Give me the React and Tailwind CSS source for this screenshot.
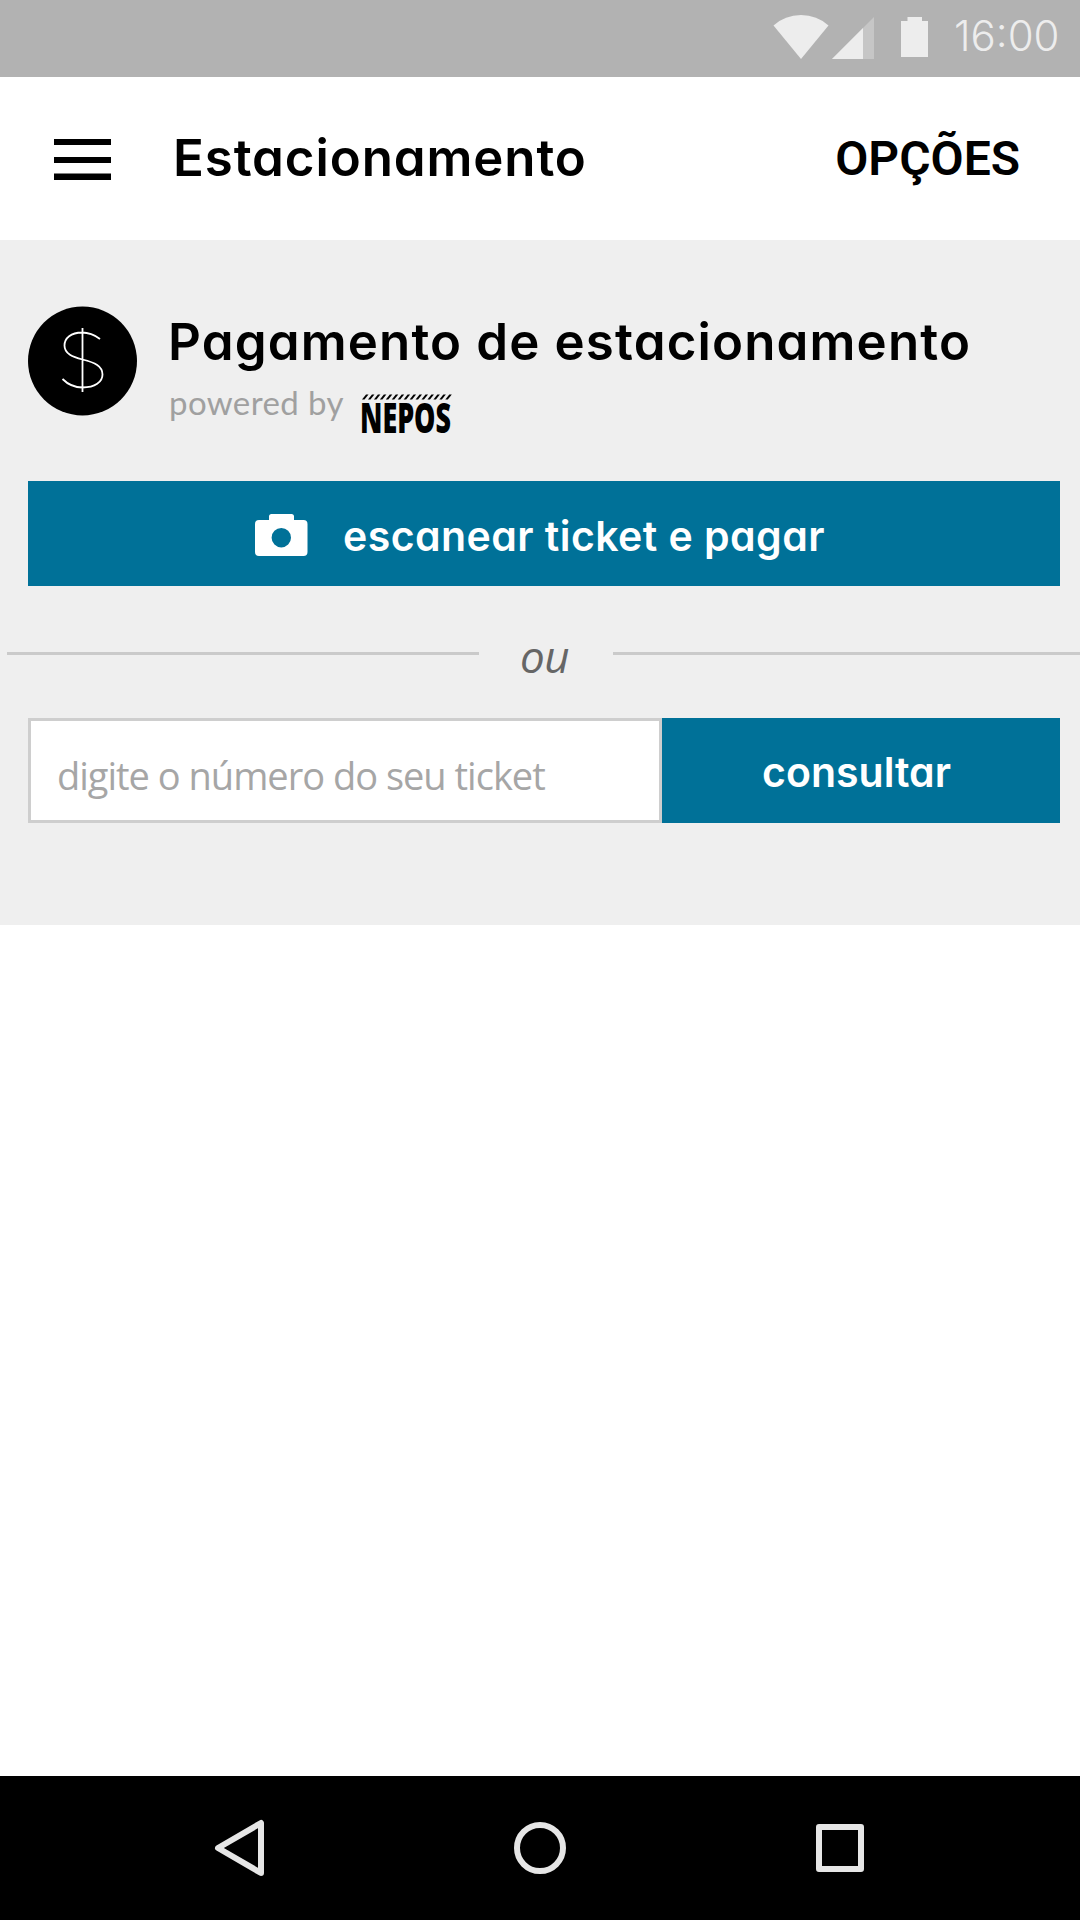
import React, { useState } from "react";

const StatusBar = () => (
  <div className="flex h-[77px] shrink-0 items-start justify-end bg-[#b2b2b2] pr-5 text-[#ededed]">
    <svg className="mt-[15px] h-11 w-[56px]" viewBox="0 0 56 44">
      <path d="M0.5 10.5Q12 0 28 0T55.500 10.500L28 44Z" fill="#ededed" />
    </svg>
    <svg className="mt-[17px] ml-[3px] h-[42px] w-[42px]" viewBox="0 0 42 42">
      <path d="M0 42L42 0V42Z" fill="#c6c6c6" />
      <path d="M0 42L31 11V42Z" fill="#ededed" />
    </svg>
    <svg className="mt-[17px] ml-[27px] h-10 w-[27px]" viewBox="0 0 27 40">
      <path d="M6.500 0H21V4H27V40H0V4H6.500Z" fill="#ededed" />
    </svg>
    <span className="mt-[11px] ml-[26px] w-[106px] font-['Inter',sans-serif] text-[42px] leading-[50px] font-[350] whitespace-nowrap">
      16:00
    </span>
  </div>
);

const Header = () => (
  <header className="flex h-[163px] shrink-0 items-start bg-white pl-[54px] text-black">
    <button className="mt-[62px] h-[41px] w-[57px]" aria-label="Menu">
      <svg className="block" width="57" height="41" viewBox="0 0 57 41">
        <path d="M0 0H57V6H0ZM0 18H57V24H0ZM0 34.500H57V41H0Z" fill="#000" />
      </svg>
    </button>
    <h1 className="mt-[51px] ml-[62px] font-['Inter',sans-serif] text-[51px] leading-[60px] font-semibold tracking-[0.9px] [font-feature-settings:'cv11']">
      Estacionamento
    </h1>
    <button className="mt-[52px] mr-[60px] ml-auto font-['Roboto',sans-serif] text-[48px] leading-[60px] font-semibold">
      OPÇÕES
    </button>
  </header>
);

const DollarIcon = () => (
  <svg className="h-[110px] w-[110px] shrink-0" viewBox="0 0 110 110">
    <circle cx="54.500" cy="55" r="54.500" fill="#000" />
    <path
      d="M54.500 22V86M72 33C66 28.500 60 26.500 54 26.500C43 26.500 36.500 32 36.500 39.500C36.500 48 45 51 54.500 53.500C67 56.500 74.500 60 74.500 68.500C74.500 76 67 81.500 54.500 81.500C47 81.500 40 78.500 34.500 73"
      fill="none"
      stroke="#fff"
      strokeWidth="1.800"
    />
  </svg>
);

const NeposLogo = () => (
  <svg className="h-[42px] w-[92px] overflow-visible" viewBox="0 0 92 42">
    {/* hatched bar over the name */}
    {Array.from({ length: 15 }, (_, i) => (
      <path key={i} d="M0 5.500L4 0.500H6.500L2.500 5.500Z" transform={`translate(${i * 5.95} 0)`} />
    ))}
    <text
      x="-2"
      y="39"
      textLength="91"
      lengthAdjust="spacingAndGlyphs"
      className="font-['Open_Sans',sans-serif] text-[42px] font-extrabold"
    >
      NEPOS
    </text>
  </svg>
);

const NavBar = () => (
  <nav className="flex h-36 shrink-0 items-center bg-black pl-[214px]">
    <svg width="50" height="58" viewBox="0 0 50 58">
      <path d="M47 4V54L4 29Z" fill="none" stroke="#e6e6e6" strokeWidth="6" strokeLinejoin="round" />
    </svg>
    <svg className="ml-[250px]" width="52" height="52" viewBox="0 0 52 52">
      <circle cx="26" cy="26" r="23" fill="none" stroke="#e6e6e6" strokeWidth="6" />
    </svg>
    <svg className="ml-[250px]" width="48" height="48" viewBox="0 0 48 48">
      <rect x="3" y="3" width="42" height="42" fill="none" stroke="#e6e6e6" strokeWidth="6" strokeLinejoin="round" />
    </svg>
  </nav>
);

const App = () => {
  const [ticket, setTicket] = useState("");

  return (
    <div className="flex h-[1920px] w-[1080px] flex-col overflow-hidden bg-white">
      <StatusBar />
      <Header />

      <section className="h-[685px] shrink-0 bg-[#efefef]">
        {/* Title */}
        <div className="flex h-[241px] items-start pt-[66px] pl-7">
          <DollarIcon />
          <div className="ml-[30px]">
            <h2 className="mt-2 font-['Inter',sans-serif] text-[51px] leading-[56px] font-semibold tracking-[1.15px] whitespace-nowrap text-black [font-feature-settings:'cv11']">
              Pagamento de estacionamento
            </h2>
            <div className="mt-1 flex items-start">
              <span className="mt-[8px] ml-px w-[193px] font-['Lato',sans-serif] text-[33px] leading-[40px] font-normal tracking-[0.4px] whitespace-nowrap text-[#a0a0a0]">
                powered by
              </span>
              <div className="mt-[20px]">
                <NeposLogo />
              </div>
            </div>
          </div>
        </div>

        <button className="ml-7 flex h-[105px] w-[1032px] items-start bg-[#007198] pl-[227px] text-white">
          <svg className="mt-[33px]" width="53" height="42" viewBox="0 0 53 42">
            <path
              fillRule="evenodd"
              d="M16.500 0H36.500Q39 0 39 2.500V6H48.500Q52.500 6 52.500 10V38Q52.500 42 48.500 42H4Q0 42 0 38V10Q0 6 4 6H14V2.500Q14 0 16.500 0ZM26.300 14A9.700 9.700 0 1 0 26.300 33.400A9.700 9.700 0 1 0 26.300 14Z"
              fill="#fff"
            />
          </svg>
          <span className="mt-[30px] ml-[35px] font-['Inter',sans-serif] text-[41px] leading-[50px] font-semibold tracking-[0.45px] [font-feature-settings:'cv11']">
            escanear ticket e pagar
          </span>
        </button>

        <div className="flex h-[132px] items-start pl-[7px]">
          <div className="mt-[66px] h-[3px] w-[472px] bg-[#cacaca]" />
          <span className="mt-[45px] w-[134px] pr-[3px] text-center font-['Open_Sans',sans-serif] text-[44px] leading-[50px] tracking-[-0.5px] text-[#666] italic">
            ou
          </span>
          <div className="mt-[66px] h-[3px] flex-1 bg-[#cacaca]" />
        </div>

        {/* Ticket number */}
        <form className="ml-7 flex h-[105px] w-[1032px]" onSubmit={(e) => e.preventDefault()}>
          <input
            type="text"
            className="w-[634px] border-[3px] border-[#cecece] bg-white pt-[9px] pl-[26px] font-['Open_Sans',sans-serif] text-[38px] tracking-[-1px] text-black outline-none placeholder:text-[#a6a6a6]"
            placeholder="digite o número do seu ticket"
            value={ticket}
            onChange={(e) => setTicket(e.target.value)}
          />
          <button className="flex-1 bg-[#007198] pt-[4px] pr-[9px] font-['Inter',sans-serif] text-[41px] font-semibold text-white [font-feature-settings:'cv11']">
            consultar
          </button>
        </form>
      </section>

      <main className="flex-1 bg-white" />
      <NavBar />
    </div>
  );
};

export default App;
